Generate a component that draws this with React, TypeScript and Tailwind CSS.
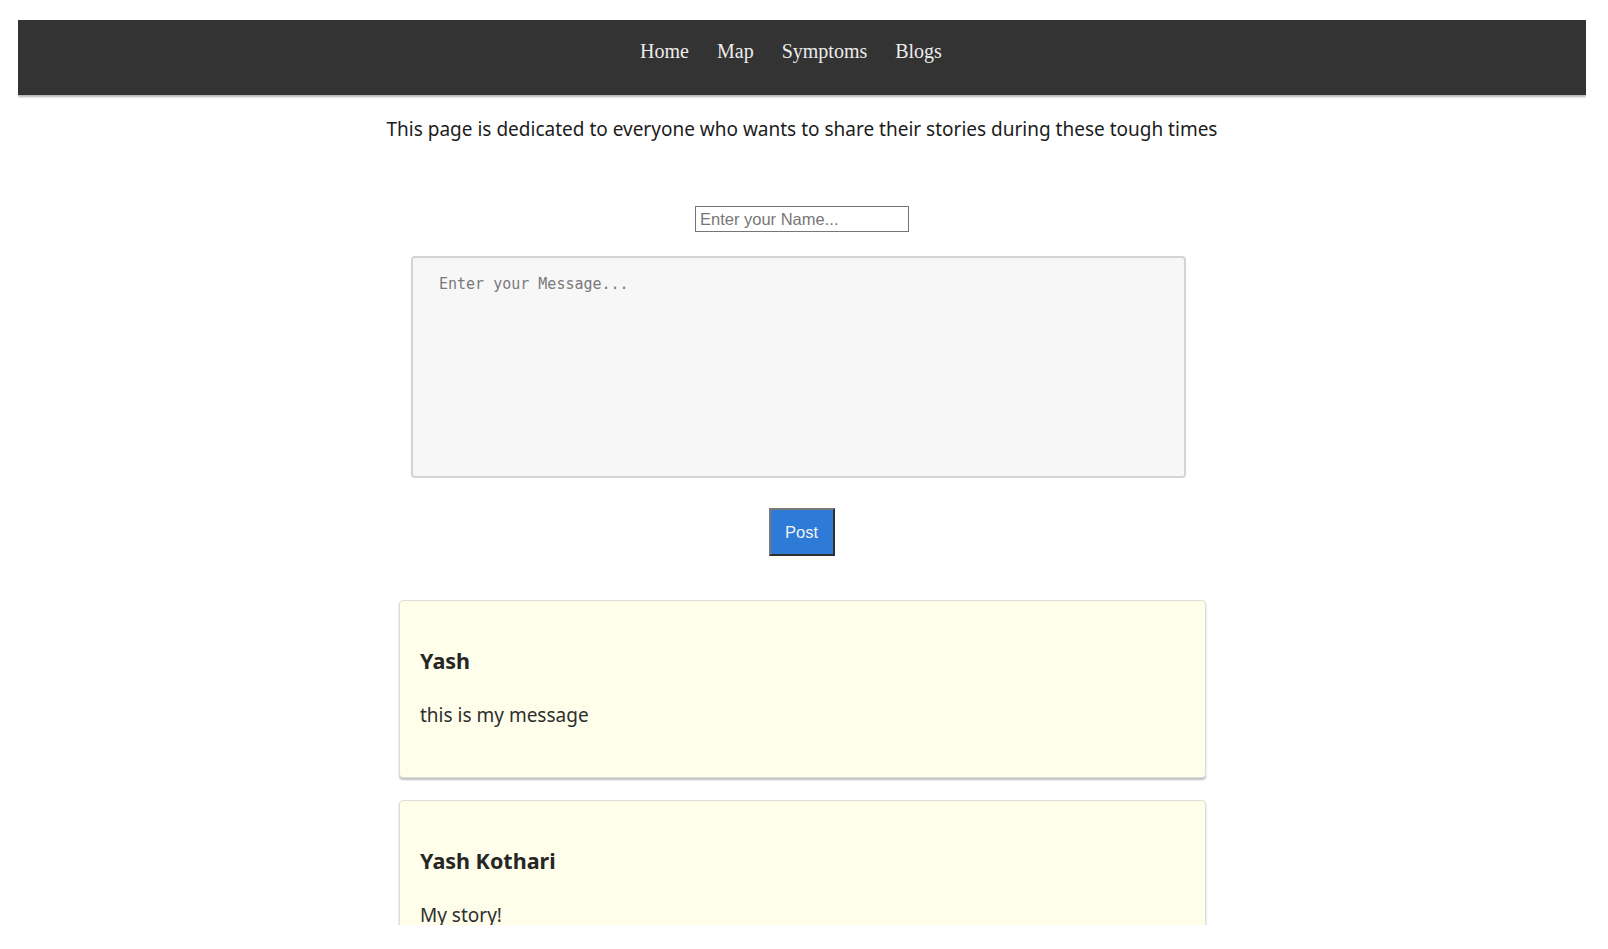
import React from "react";

const sans = { fontFamily: '"Noto Sans", "DejaVu Sans", sans-serif' };

function Card({ name, message }: { name: string; message: string }) {
  return (
    <div className="ml-[1px] w-[807px] shrink-0 rounded-[4px] border border-[#dedeD8] bg-[#fefeeb] pl-[20px] pt-[46px] pb-[50px] shadow-[0_2px_2px_rgba(0,0,0,0.25)]">
      <h3 className="text-[21.5px] font-bold leading-[28px] text-[#262626]">{name}</h3>
      <p className="mt-[28px] text-[19px] leading-[24px] text-[#2e2e2e]">{message}</p>
    </div>
  );
}

export default function App() {
  return (
    <div className="h-[949px] w-[1608px] overflow-hidden bg-white pl-[18px] pt-[20px]" style={sans}>
      <div className="flex h-[905px] w-[1568px] flex-col items-center overflow-hidden">
        <nav className="flex h-[75px] w-full shrink-0 justify-center gap-[28px] bg-[#333333] pr-[22px] pt-[20px] shadow-[0_2px_2px_rgba(0,0,0,0.3)] font-['Liberation_Serif',serif] text-[20px] leading-[23px] text-[#ececec]">
          <a href="#">Home</a>
          <a href="#">Map</a>
          <a href="#">Symptoms</a>
          <a href="#">Blogs</a>
        </nav>
        <p className="mt-[22px] text-[19px] leading-[24px] text-[#1c1c1c]">
          This page is dedicated to everyone who wants to share their stories during these tough times
        </p>
        <input
          type="text"
          placeholder="Enter your Name..."
          className="mt-[65px] h-[26px] w-[214px] shrink-0 border border-[#767676] bg-white px-[4px] font-['Liberation_Sans',sans-serif] text-[16.5px] leading-[20px] text-[#222] outline-none placeholder:text-[#777]"
        />
        <textarea
          placeholder="Enter your Message..."
          className="ml-[-7px] mt-[24px] h-[222px] w-[775px] shrink-0 resize-none rounded-[4px] border-2 border-[#d4d4d4] bg-[#f7f7f7] pl-[26px] pt-[18px] font-['DejaVu_Sans_Mono',monospace] text-[15px] leading-[17px] text-[#333] outline-none placeholder:text-[#7a7a7a]"
        />
        <button className="ml-[-1px] mt-[30px] h-[48px] w-[66px] shrink-0 border-2 border-t-[#7a7a7a] border-l-[#7a7a7a] border-b-[#2e2e2e] border-r-[#2e2e2e] bg-[#2d7bd6] font-['Liberation_Sans',sans-serif] text-[16.5px] text-[#f2f2f2]">
          Post
        </button>
        <div className="mt-[44px] flex flex-col gap-[22px]">
          <Card name="Yash" message="this is my message" />
          <Card name="Yash Kothari" message="My story!" />
        </div>
      </div>
    </div>
  );
}
